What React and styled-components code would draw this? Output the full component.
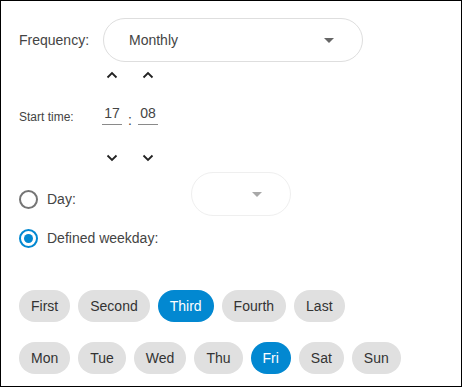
import React, { useState } from 'react';
import styled, { createGlobalStyle } from 'styled-components';

const GlobalStyle = createGlobalStyle`
  * { box-sizing: border-box; }
  body {
    margin: 0;
    font-family: "Liberation Sans", Arial, sans-serif;
    background: #fff;
  }
`;

const Panel = styled.div`
  width: 462px;
  height: 387px;
  border: 1px solid #000;
  padding: 17px 0 0 18px;
  display: flex;
  flex-direction: column;
`;

const Row = styled.div`
  display: flex;
  align-items: ${p => p.$align || 'center'};
  margin-top: ${p => p.$top || 0}px;
`;

const FieldLabel = styled.span`
  width: ${p => p.$width}px;
  font-size: ${p => p.$size || 14}px;
  color: #444;
`;

const SelectBox = styled.div`
  position: relative;
  width: ${p => p.$width}px;
  height: 44px;
  border-radius: 22px;
  border: 1px solid ${p => (p.$disabled ? '#efefef' : '#dedede')};
  display: flex;
  align-items: center;
  padding-left: 25px;
  font-size: 14px;
  color: #444;
`;

const Caret = styled.span`
  position: absolute;
  right: 28px;
  top: 50%;
  margin-top: -2px;
  width: 0;
  height: 0;
  border-left: 5px solid transparent;
  border-right: 5px solid transparent;
  border-top: 5px solid ${p => (p.$disabled ? '#a8a8a8' : '#666')};
`;

const TimeBlock = styled.div`
  display: flex;
  align-items: center;
`;

const TimeColumn = styled.div`
  display: flex;
  flex-direction: column;
  align-items: center;
  width: 20px;
`;

const ArrowButton = styled.button`
  width: 24px;
  height: 24px;
  border: none;
  background: none;
  padding: 0;
  display: flex;
  align-items: center;
  justify-content: center;
  cursor: pointer;
`;

const TimeInput = styled.div`
  width: 20px;
  height: 21px;
  margin: 17px 0 21px;
  border-bottom: 1px solid #8a8a8a;
  font-size: 14px;
  color: #444;
  text-align: center;
  line-height: 18px;
`;

const Colon = styled.span`
  width: 16px;
  text-align: center;
  font-size: 14px;
  color: #444;
  margin-top: 6px;
`;

const RadioOption = styled.label`
  display: flex;
  align-items: center;
  height: 38px;
  width: ${p => p.$width || 'auto'};
  margin-top: ${p => p.$top || 0}px;
  font-size: 14px;
  color: #444;
  gap: 9px;
  cursor: pointer;
`;

const RadioCircle = styled.span`
  width: 19px;
  height: 19px;
  border-radius: 50%;
  border: 2px solid ${p => (p.$checked ? '#0288d1' : '#757575')};
  display: flex;
  align-items: center;
  justify-content: center;
  &::after {
    content: '';
    width: 9px;
    height: 9px;
    border-radius: 50%;
    background: ${p => (p.$checked ? '#0288d1' : 'transparent')};
  }
`;

const ChipRow = styled.div`
  display: flex;
  gap: 8px;
  margin-top: ${p => p.$top}px;
`;

const Chip = styled.button`
  height: 32px;
  border-radius: 16px;
  border: none;
  padding: 0 12px;
  font-family: inherit;
  font-size: 14px;
  background: ${p => (p.$active ? '#0288d1' : '#e0e0e0')};
  color: ${p => (p.$active ? '#fff' : '#333')};
  cursor: pointer;
`;

function Chevron({ up }) {
  return (
    <svg width="12" height="8" viewBox="0 0 12 8">
      <path
        d={up ? 'M1.5 6.5 L6 2 L10.5 6.5' : 'M1.5 1.5 L6 6 L10.5 1.5'}
        fill="none"
        stroke="#222"
        strokeWidth="1.8"
      />
    </svg>
  );
}

const ordinals = ['First', 'Second', 'Third', 'Fourth', 'Last'];
const weekdays = ['Mon', 'Tue', 'Wed', 'Thu', 'Fri', 'Sat', 'Sun'];

export default function App() {
  const [mode, setMode] = useState('weekday');
  const [ordinal, setOrdinal] = useState('Third');
  const [weekday, setWeekday] = useState('Fri');

  return (
    <>
      <GlobalStyle />
      <Panel>
        <Row>
          <FieldLabel $width={84}>Frequency:</FieldLabel>
          <SelectBox $width={260}>
            Monthly
            <Caret />
          </SelectBox>
        </Row>

        <Row $top={1}>
          <FieldLabel $width={83} $size={12}>Start time:</FieldLabel>
          <TimeBlock>
            <TimeColumn>
              <ArrowButton><Chevron up /></ArrowButton>
              <TimeInput>17</TimeInput>
              <ArrowButton><Chevron /></ArrowButton>
            </TimeColumn>
            <Colon>:</Colon>
            <TimeColumn>
              <ArrowButton><Chevron up /></ArrowButton>
              <TimeInput>08</TimeInput>
              <ArrowButton><Chevron /></ArrowButton>
            </TimeColumn>
          </TimeBlock>
        </Row>

        <Row $align="flex-start" $top={2}>
          <RadioOption $width="172px" $top={8} onClick={() => setMode('day')}>
            <RadioCircle $checked={mode === 'day'} />
            Day:
          </RadioOption>
          <SelectBox $width={100} $disabled>
            <Caret $disabled />
          </SelectBox>
        </Row>

        <RadioOption $top={1} onClick={() => setMode('weekday')}>
          <RadioCircle $checked={mode === 'weekday'} />
          Defined weekday:
        </RadioOption>

        <ChipRow $top={33}>
          {ordinals.map(o => (
            <Chip key={o} $active={o === ordinal} onClick={() => setOrdinal(o)}>{o}</Chip>
          ))}
        </ChipRow>
        <ChipRow $top={20}>
          {weekdays.map(d => (
            <Chip key={d} $active={d === weekday} onClick={() => setWeekday(d)}>{d}</Chip>
          ))}
        </ChipRow>
      </Panel>
    </>
  );
}
